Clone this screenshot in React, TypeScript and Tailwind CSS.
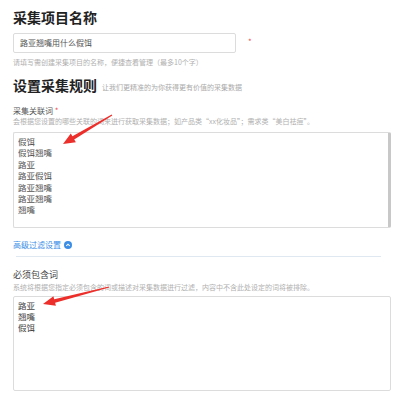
import React from "react";

function arrowPoints(tx: number, ty: number, hx: number, hy: number) {
  const dx = hx - tx;
  const dy = hy - ty;
  const len = Math.hypot(dx, dy);
  const ux = dx / len;
  const uy = dy / len;
  const nx = -uy;
  const ny = ux;
  const headLen = 12;
  const headW = 5;
  const shaftTail = 0.6;
  const shaftHead = 1.8;
  const bx = hx - ux * headLen;
  const by = hy - uy * headLen;
  const pts: [number, number][] = [
    [tx + nx * shaftTail, ty + ny * shaftTail],
    [bx + nx * shaftHead, by + ny * shaftHead],
    [bx + nx * headW, by + ny * headW],
    [hx, hy],
    [bx - nx * headW, by - ny * headW],
    [bx - nx * shaftHead, by - ny * shaftHead],
    [tx - nx * shaftTail, ty - ny * shaftTail],
  ];
  return pts.map((p) => `${p[0].toFixed(1)},${p[1].toFixed(1)}`).join(" ");
}

const font = { fontFamily: '"Noto Sans CJK SC", "Noto Sans", sans-serif' };

export default function App() {
  const kw1 = ["假饵", "假饵翘嘴", "路亚", "路亚假饵", "路亚翘嘴", "路亚翘嘴", "翘嘴"];
  const kw2 = ["路亚", "翘嘴", "假饵"];
  return (
    <div className="relative w-[400px] h-[397px] bg-white overflow-hidden" style={font}>
      <div className="pt-[8px] pl-[13px] pr-[9px]">
        <div className="h-[18px] text-[14px] leading-[18px] font-bold text-[#222]">采集项目名称</div>
        <div className="mt-[7px] flex items-center">
          <div className="w-[223px] h-[20px] border border-[#dcdcdc] rounded-[2px] flex items-center px-[6px] text-[8px] text-[#555]">
            路亚翘嘴用什么假饵
          </div>
          <span className="ml-[12px] text-[8px] text-[#f05050] -mt-[2px]">*</span>
        </div>
        <div className="mt-[4px] text-[7px] leading-[10px] text-[#b0b0b0]">
          请填写需创建采集项目的名称，便捷查看管理（最多10个字）
        </div>
        <div className="mt-[9px] h-[18px] flex items-end">
          <span className="text-[14px] leading-[18px] font-bold text-[#222]">设置采集规则</span>
          <span className="ml-[5px] text-[7px] leading-[14px] text-[#aaa]">让我们更精准的为你获得更有价值的采集数据</span>
        </div>
        <div className="mt-[12px] text-[8px] leading-[10px] text-[#555]">
          采集关联词 <span className="text-[#f05050]">*</span>
        </div>
        <div className="text-[7px] leading-[10px] text-[#b0b0b0]">
          会根据您设置的哪些关联的词来进行获取采集数据；如产品类“xx化妆品”；需求类“美白祛痘”。
        </div>
        <div className="mt-[6px] w-[378px] h-[96px] border border-[#dcdcdc] border-r-[3px] border-r-[#c8c8c8] rounded-[2px] pt-[3px] pl-[4px] text-[8.5px] leading-[11.4px] text-[#555]">
          {kw1.map((k, i) => (
            <div key={i}>{k}</div>
          ))}
        </div>
        <div className="mt-[11px] flex items-center h-[12px]">
          <span className="text-[8px] leading-[12px] text-[#3a8ee6]">高级过滤设置</span>
          <span className="ml-[3px] w-[8px] h-[8px] rounded-full bg-[#3a8ee6] flex items-center justify-center">
            <svg width="6" height="6" viewBox="0 0 6 6">
              <path d="M1.3 3.8 L3 2.2 L4.7 3.8" stroke="white" strokeWidth="1.1" fill="none" />
            </svg>
          </span>
        </div>
        <div className="mt-[5px] ml-[3px] w-[365px] h-px bg-[#dfe7f0]" />
        <div className="mt-[12px] text-[9px] leading-[12px] text-[#444]">必须包含词</div>
        <div className="mt-[1px] text-[7px] leading-[10px] text-[#b0b0b0]">
          系统将根据您指定必须包含的词或描述对采集数据进行过滤，内容中不含此处设定的词将被排除。
        </div>
        <div className="mt-[4px] w-[378px] h-[95px] border border-[#dcdcdc] rounded-[2px] pt-[3px] pl-[4px] text-[8.5px] leading-[11px] text-[#444]">
          {kw2.map((k, i) => (
            <div key={i} className="h-[11px]">{k}</div>
          ))}
        </div>
      </div>
      <svg className="absolute left-0 top-0 pointer-events-none" width="400" height="397">
        <polygon points={arrowPoints(112, 115, 63, 144)} fill="#ec2f2a" />
        <polygon points={arrowPoints(109, 287, 43, 304)} fill="#ec2f2a" />
      </svg>
    </div>
  );
}
